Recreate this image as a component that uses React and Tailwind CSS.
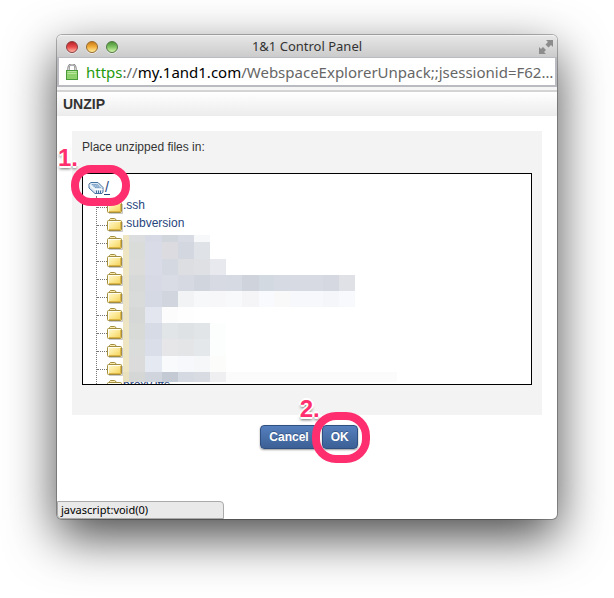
import { Fragment } from 'react';

const FOLDERS = ['.ssh', '.subversion', '', '', '', '', '', '', '', '', 'proxy.iffs'];

// Column and row edges of the pixelated area, relative to its own corner
const COLS = [0, 6, 22, 39, 55, 71, 87, 103, 119, 136, 151, 167, 184, 200, 216, 232];
const ROWS = [0, 7, 24, 40, 56, 72, 88, 104, 121, 137, 147];

const MOSAIC = [
  ['#eee5c3', '#dcddde', '#d7dae4', '#d1d5dc', '#d8dbe4', '#f7f8fa'],
  ['#eee5c3', '#dadcda', '#d9dce6', '#dbdbe0', '#d3d7e0', '#dfe2e6'],
  ['#eee5c3', '#dcddda', '#d9dce6', '#d4d8e1', '#dcdee1', '#dfe0e3', '#e8e9ee'],
  ['#ece4c5', '#d6d9d8', '#d7dae5', '#d9dce5', '#d6d9e2', '#d1d6de', '#d7dae3', '#d6dae3', '#cfd4dc', '#d3d9e1', '#d6dae2', '#d7dae3', '#d7dae3', '#d5d8e0', '#dfe1e7'],
  ['#ece4c5', '#d8dbd9', '#d5d9e3', '#d1d5de', '#f2f3f5', '#f7f8fa', '#f7f7f9', '#f8f9fb', '#f5f5f7', '#f8fafd', '#f9f9f9', '#f7f8fb', '#f6f8fb', '#f5f6f9', '#f8f9fc'],
  ['#ece4c5', '#d5d8d6', '#e3e6ef', '#fbfcfb', '#fefefe', '#ffffff'],
  ['#eee5c3', '#d8dad8', '#d7dbe5', '#e2e5e8', '#dfe2e5', '#e2e5e8', '#fcfdfd'],
  ['#eee5c3', '#dadbdb', '#dadee8', '#e6e6e9', '#e3e5e7', '#e5e8eb', '#fcfdfd'],
  ['#eee5c3', '#dadbda', '#e5e9f2', '#f9fafc', '#f7f8fb', '#f6f7f8', '#fcfcfb'],
  ['#e9e0bd', '#d4d7d5', '#d0d5dd', '#c3cad3', '#d5d9e1', '#d8dbe1', '#efeff1', '#fbfbfb', '#fbfbfb', '#fbfbfb', '#fbfbfb', '#fbfbfb', '#fbfbfb', '#fbfbfb', '#fbfbfb'],
];

const Mosaic = () => (
  <svg width="275" height="147" shapeRendering="crispEdges" aria-hidden="true">
    {MOSAIC.map((row, r) => (
      <Fragment key={r}>
        {row.map((color, c) => (
          <rect
            key={c}
            x={COLS[c]}
            y={ROWS[r]}
            width={COLS[c + 1] - COLS[c]}
            height={ROWS[r + 1] - ROWS[r]}
            fill={color}
          />
        ))}
      </Fragment>
    ))}
    <rect x="232" y="137" width="42" height="10" fill="#fbfbfb" />
  </svg>
);

const FolderIcon = () => (
  <svg width="16" height="14" viewBox="0 0 16 14" className="shrink-0" aria-hidden="true">
    <defs>
      <linearGradient id="folder" x1="0" y1="0" x2="1" y2="1">
        <stop offset="0" stopColor="#fffbe0" />
        <stop offset="0.45" stopColor="#fdeb9c" />
        <stop offset="1" stopColor="#f3cf4d" />
      </linearGradient>
    </defs>
    <path d="M2 13.500h13.500V4" fill="none" stroke="#c9c9c9" />
    <path d="M2.500 3V1.500L3.500.5h4L9 1.500V3" fill="#fbedb0" stroke="#a38d3e" />
    <rect x=".5" y="2.500" width="14" height="10" rx="1" fill="url(#folder)" stroke="#a38d3e" />
    <path d="M1.500 11.500v-8h12" fill="none" stroke="#fffdf0" />
    <path d="M2 11.500h11.500V4" fill="none" stroke="#dcb545" />
  </svg>
);

const DriveIcon = () => (
  <svg width="16" height="12" viewBox="0 0 16 12" className="shrink-0" aria-hidden="true">
    <path d="M1 2 3 .5h7l5 5V10l-1 1.500H7L1 6z" fill="#dce8f3" stroke="#44719f" strokeLinejoin="round" />
    <path d="M3 2h6.500l4 4H7.500z" fill="#a9c4de" />
    <path d="M4 2.500h5.500M5.500 4h5.500M7 5.500h5.500" stroke="#6b93bd" strokeWidth=".8" strokeDasharray="1.500 .8" />
    <path d="M1.500 3 7 7.500h7.500" fill="none" stroke="#fff" />
    <path d="M8.500 8.500v2.500M10.500 8.500v2.500M12.500 8.500v2.500" stroke="#44719f" />
  </svg>
);

const LockIcon = () => (
  <svg width="12" height="16" viewBox="0 0 12 16" className="shrink-0" aria-hidden="true">
    <path d="M2.500 7V4a3.500 3.500 0 0 1 7 0v3" fill="none" stroke="#777" strokeWidth="2.200" />
    <path d="M2.500 7V4a3.500 3.500 0 0 1 7 0v3" fill="none" stroke="#d8d8d8" strokeWidth=".9" />
    <rect x=".5" y="6.500" width="11" height="9" fill="#8ed16c" stroke="#4b9a3a" />
    <path d="M1.500 7.500h9M1.500 9.500h9" stroke="#b8e6a0" />
  </svg>
);

const ResizeIcon = () => (
  <svg width="14" height="14" viewBox="0 0 14 14" aria-hidden="true">
    <path d="M7 0h7v7l-2-2-2.500 2.500L6.500 4.500 9 2zM0 7l2 2 2-2 3 3-2 2 2 2H0z" fill="#8c8c8c" />
  </svg>
);

const lights = [
  { label: 'Close', color: 'from-[#b82329] via-[#e94b4b] to-[#ffb3a8] border-[#8d3a3c]' },
  { label: 'Minimize', color: 'from-[#cd7a16] via-[#f2b03d] to-[#fff09a] border-[#96692c]' },
  { label: 'Zoom', color: 'from-[#4c9137] via-[#80c464] to-[#d5f7ae] border-[#4d7840]' },
];

const StepLabel = ({ children, className }) => (
  <span
    className={`pointer-events-none absolute text-2xl leading-6 font-bold text-[#ff2e6e] [text-shadow:1px_0_0_#fff,-1px_0_0_#fff,0_1px_0_#fff,0_-1px_0_#fff,2px_0_0_#fff,-2px_0_0_#fff,0_2px_0_#fff,0_-2px_0_#fff,0_3px_3px_#0009] ${className}`}
  >
    {children}
  </span>
);

const buttonStyle =
  'h-6 rounded border border-[#2f4f80] bg-linear-to-b from-[#557fbd] to-[#3c6096] px-2 text-xs font-bold text-white shadow-[0_1px_2px_#0006] [text-shadow:0_-1px_0_#0004]';

const App = () => {
  return (
    <div className="min-h-screen bg-white px-[57px] pt-[35px] pb-[79px] font-['Liberation_Sans',Arial,sans-serif] text-xs text-[#333]">
      <div className="relative rounded-[5px] bg-white shadow-[0_0_0_1px_#0004,0_18px_50px_#000000b8]">
        {/* Title bar */}
        <header className="relative flex h-[22px] items-center justify-center rounded-t-[5px] border-t border-[#f2f2f2] bg-linear-to-b from-[#e6e6e6] to-[#cbcbcb]">
          <div className="absolute left-[9px] flex gap-2">
            {lights.map((light) => (
              <button
                key={light.label}
                aria-label={light.label}
                className={`size-3 rounded-full border bg-linear-to-b shadow-[0_1px_0_#fff8] ${light.color}`}
              />
            ))}
          </div>
          <h1 className="pb-0.5 font-['Noto_Sans','Open_Sans',sans-serif] text-[13px] leading-5 text-[#333]">1&amp;1 Control Panel</h1>
          <button aria-label="Full screen" className="absolute right-1">
            <ResizeIcon />
          </button>
        </header>

        {/* Address bar */}
        <div className="flex h-[30px] items-center gap-2 border-x-2 border-t border-b-2 border-[#b9bbc0] bg-white pl-[7px] font-['Noto_Sans','Open_Sans',sans-serif] text-[15px] leading-6 whitespace-nowrap">
          <LockIcon />
          <span className="text-[#666]">
            <span className="text-[#1f9a0c]">https</span>://<span className="text-black">my.1and1.com</span>
            /WebspaceExplorerUnpack;;jsessionid=F62…
          </span>
        </div>
        <div className="h-[5px] border-b-2 border-[#d4d4d4] bg-[#f5f5f5]" />

        <h2 className="h-6 bg-linear-to-b from-white to-[#ececec] pl-1.5 text-sm leading-6 font-bold">UNZIP</h2>

        <main className="px-[15px] pt-[15px] pb-[70px]">
          <div className="relative bg-[#f3f3f3] px-2.5 pt-2 pb-[30px]">
            <p className="h-[34px] leading-4">Place unzipped files in:</p>
            <div className="relative h-[212px] overflow-hidden border border-black bg-white pl-[5px]">
              <a href="#root" className="mt-1.5 flex h-4 items-center text-sm leading-4 text-[#27457d]">
                <DriveIcon />
                <span className="border-b border-[#27457d] px-px leading-[13px]">/</span>
              </a>
              <ul className="ml-2 border-l border-dotted border-[#777]">
                {FOLDERS.map((name, i) => (
                  <li key={i} className="flex h-[18px] items-center">
                    <span className="mt-1 w-2.5 border-t border-dotted border-[#777]" />
                    <span className="mt-1">
                      <FolderIcon />
                    </span>
                    <a href="#folder" aria-label={name || 'Folder'} className="leading-[18px] text-[#27457d]">
                      {name}
                    </a>
                  </li>
                ))}
              </ul>
              <div className="absolute top-[61px] left-10">
                <Mosaic />
              </div>
            </div>
            <span className="pointer-events-none absolute top-[34px] -left-px h-[41px] w-[59px] rounded-[20px] border-8 border-[#ff2e6e]" />
            <StepLabel className="top-[15px] -left-3.5">1.</StepLabel>
          </div>

          <div className="mt-2.5 flex justify-center gap-1 pl-1">
            <button className={buttonStyle}>Cancel</button>
            <div className="relative">
              <button className={buttonStyle}>OK</button>
              <span className="pointer-events-none absolute -top-[13px] -left-2.5 h-[51px] w-[58px] rounded-[24px] border-8 border-[#ff2e6e]" />
              <StepLabel className="-top-7 -left-[22px]">2.</StepLabel>
            </div>
          </div>
        </main>

        {/* Link status bubble */}
        <div className="absolute bottom-0 left-0 h-[18px] w-1/3 rounded-tr rounded-bl border border-[#aaa] bg-[#e9e9e9] pl-[3px] font-['Noto_Sans','Open_Sans',sans-serif] text-[11px] leading-4 text-black">
          javascript:void(0)
        </div>
      </div>
    </div>
  );
};

export default App;
